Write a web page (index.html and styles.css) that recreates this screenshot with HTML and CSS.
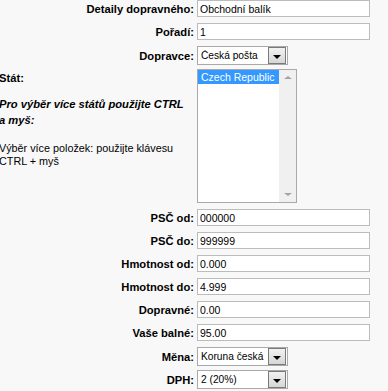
FILE: index.html
```html
<!DOCTYPE html>
<html lang="cs">
<head>
    <meta charset="UTF-8">
    <meta name="viewport" content="width=device-width, initial-scale=1.0">
    <title>Dopravné</title>
    <link rel="stylesheet" href="styles.css">
</head>
<body>
    <div class="shipping-form">
        <div class="row">
            <label class="lbl">Detaily dopravného:</label>
            <input class="txt" type="text" value="Obchodní balík">
        </div>
        <div class="row">
            <label class="lbl">Pořadí:</label>
            <input class="txt" type="text" value="1">
        </div>
        <div class="row row-combo">
            <label class="lbl">Dopravce:</label>
            <div class="combo"><span class="combo-text">Česká pošta</span><span class="combo-btn"></span></div>
        </div>

        <div class="row row-top">
            <div class="info">
                <div class="info-title">Stát:</div>
                <div class="info-hint">Pro výběr více států použijte CTRL a myš:</div>
                <div class="info-note">Výběr více položek: použijte klávesu CTRL + myš</div>
            </div>
            <div class="listbox">
                <div class="options">
                    <div class="option selected">Czech Republic</div>
                </div>
                <div class="scroll">
                    <span class="arrow-up"></span>
                    <span class="arrow-down"></span>
                </div>
            </div>
        </div>

        <div class="row">
            <label class="lbl">PSČ od:</label>
            <input class="txt" type="text" value="000000">
        </div>
        <div class="row">
            <label class="lbl">PSČ do:</label>
            <input class="txt" type="text" value="999999">
        </div>
        <div class="row">
            <label class="lbl">Hmotnost od:</label>
            <input class="txt" type="text" value="0.000">
        </div>
        <div class="row">
            <label class="lbl">Hmotnost do:</label>
            <input class="txt" type="text" value="4.999">
        </div>
        <div class="row">
            <label class="lbl">Dopravné:</label>
            <input class="txt" type="text" value="0.00">
        </div>
        <div class="row">
            <label class="lbl">Vaše balné:</label>
            <input class="txt" type="text" value="95.00">
        </div>
        <div class="row row-combo">
            <label class="lbl">Měna:</label>
            <div class="combo"><span class="combo-text">Koruna česká</span><span class="combo-btn"></span></div>
        </div>
        <div class="row row-last">
            <label class="lbl">DPH:</label>
            <div class="combo"><span class="combo-text">2 (20%)</span><span class="combo-btn"></span></div>
        </div>
    </div>
</body>
</html>
```

FILE: styles.css
```css
body {
    margin: 0;
    background-color: #f8f8f8;
    font-family: "Liberation Sans", Arial, sans-serif;
    color: #000;
    overflow: hidden;
}
.shipping-form {
    width: 388px;
    border-bottom: 1px solid #d4d4d4;
}
.row {
    display: flex;
    align-items: center;
    margin-bottom: 6px;
}
.row-combo {
    margin-bottom: 4px;
}
.row-top {
    align-items: flex-start;
}
.row-last {
    margin-bottom: 2px;
}
.lbl {
    width: 194px;
    margin-right: 3px;
    text-align: right;
    font-size: 11.2px;
    font-weight: bold;
    white-space: nowrap;
}
.txt {
    box-sizing: border-box;
    width: 173px;
    height: 17px;
    margin: 0;
    padding: 0 2px;
    border: 1px solid #bcbcbc;
    background: #fff;
    font-family: "Liberation Sans", Arial, sans-serif;
    font-size: 10.5px;
    color: #000;
    outline: none;
}
.combo {
    box-sizing: border-box;
    display: flex;
    align-items: center;
    width: 91px;
    height: 19px;
    padding: 0 1px 0 3px;
    border: 1px solid #a9a9a9;
    background: #fff;
    font-size: 10.2px;
}
.combo-text {
    flex: 1;
    white-space: nowrap;
    overflow: hidden;
}
.combo-btn {
    position: relative;
    flex: none;
    box-sizing: border-box;
    width: 18px;
    height: 17px;
    border: 1px solid #7a7a7a;
    background: linear-gradient(#f2f2f2, #d6d6d6);
}
.combo-btn::after {
    content: "";
    position: absolute;
    left: 4px;
    top: 7px;
    border-left: 4px solid transparent;
    border-right: 4px solid transparent;
    border-top: 4px solid #000;
}
.info {
    box-sizing: border-box;
    width: 194px;
    margin-left: -1px;
    margin-right: 4px;
    padding-right: 5px;
    font-size: 11.2px;
}
.info-title {
    margin-top: 1px;
    font-weight: bold;
    line-height: 16px;
}
.info-hint {
    margin-top: 10px;
    font-weight: bold;
    font-style: italic;
    line-height: 16px;
}
.info-note {
    margin-top: 14px;
    font-size: 10.8px;
    line-height: 13px;
}
.listbox {
    box-sizing: border-box;
    display: flex;
    width: 100px;
    height: 134px;
    border: 1px solid #a9a9a9;
    background: #fff;
}
.options {
    flex: 1;
    min-width: 0;
}
.option {
    height: 14px;
    padding-left: 3px;
    font-size: 10.5px;
    line-height: 14px;
    white-space: nowrap;
    overflow: hidden;
}
.option.selected {
    background-color: #3399ff;
    color: #fff;
}
.scroll {
    position: relative;
    width: 17px;
    background: #f0f0f0;
}
.arrow-up,
.arrow-down {
    position: absolute;
    left: 5px;
    border-left: 4px solid transparent;
    border-right: 4px solid transparent;
}
.arrow-up {
    top: 6px;
    border-bottom: 3px solid #a3a3a3;
}
.arrow-down {
    bottom: 6px;
    border-top: 3px solid #a3a3a3;
}
```
